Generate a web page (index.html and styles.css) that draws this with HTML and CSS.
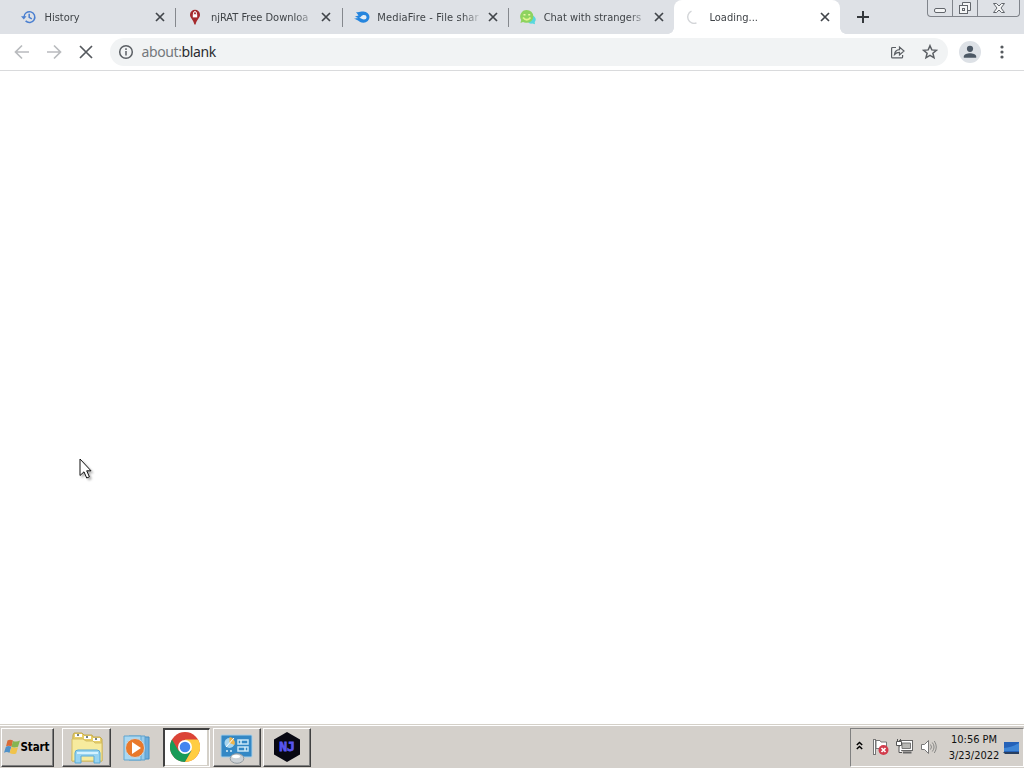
FILE: index.html
```html
<!DOCTYPE html>
<html lang="en">
<head>
    <meta charset="UTF-8">
    <title>Loading...</title>
    <link rel="stylesheet" href="styles.css">
</head>
<body>
    <div class="tab-strip">
        <div class="tab">
            <svg class="favicon" viewBox="0 0 16 16" fill="none" stroke="#4a7fd0" stroke-width="1.5"><path d="M3 8a5.4 5.4 0 1 1 1.6 3.9M8.2 4.8v3.6l2.6 1.5"/><path d="M0 7.2h5.500L2.800 10.500z" fill="#4a7fd0" stroke="none"/></svg>
            <span class="tab-title">History</span>
            <svg class="close" viewBox="0 0 10 10"><path d="M1 1l8 8M9 1L1 9"/></svg>
        </div>
        <div class="tab">
            <svg class="favicon" viewBox="0 0 16 16"><path d="M8 .8a5 5 0 0 0-5 5C3 9 6.5 11 7.4 15.5h1.2C9.500 11 13 9 13 5.8a5 5 0 0 0-5-5z" fill="#a52a2d"/><path d="M5.800 5.200h4.400v3.200H5.800z" fill="#fff"/><path d="M6.600 5.400V4a1.400 1.400 0 0 1 2.800 0v1.400" fill="none" stroke="#fff"/></svg>
            <span class="tab-title">njRAT Free Downloa</span>
            <svg class="close" viewBox="0 0 10 10"><path d="M1 1l8 8M9 1L1 9"/></svg>
        </div>
        <div class="tab">
            <svg class="favicon" viewBox="0 0 16 16"><path d="M2 3C5 3.700 6 2.500 9.500 2.500a6 5.600 0 0 1 0 11.200c-3 0-4-1.400-5.500-2.200L0 9.600c2-.1 3-.1 4-.5L1 7.500l3.500-1z" fill="#2585de"/><path d="M5 8.500C7 9 7 6 10 6a2.600 2.200 0 0 1 0 4.400C8 10.400 7.500 9.500 5 8.500z" fill="#e3edf6"/></svg>
            <span class="tab-title wide">MediaFire - File shar</span>
            <svg class="close" viewBox="0 0 10 10"><path d="M1 1l8 8M9 1L1 9"/></svg>
        </div>
        <div class="tab">
            <svg class="favicon" viewBox="0 0 16 16"><path d="M13 6.500c3 2 3.500 4.500 1.700 6.500l.3 2.300-2.600-.7c-2 .3-3.200 0-4-1z" fill="#58d8de"/><path d="M6.700 1a6.600 6.400 0 0 1 0 12.800c-1.600.2-2.700-.2-3.700-.7L.5 14l.7-3A6.600 6.500 0 0 1 6.700 1z" fill="#8ed35f"/><path d="M3 8.500q3.800 4.500 7.500 0" fill="none" stroke="#dff58f" stroke-width="1.800"/><path d="M3.500 5.800h2M8.200 5.800h2" stroke="#e9f8a8" stroke-width="1.600"/></svg>
            <span class="tab-title">Chat with strangers</span>
            <svg class="close" viewBox="0 0 10 10"><path d="M1 1l8 8M9 1L1 9"/></svg>
        </div>
        <div class="tab active">
            <svg class="favicon" viewBox="0 0 16 16" fill="none" stroke="#d3d5d8" stroke-width="1.400"><path d="M5.500 2.200a6.300 6.300 0 0 0 5 11.600"/></svg>
            <span class="tab-title">Loading...</span>
            <svg class="close" viewBox="0 0 10 10"><path d="M1 1l8 8M9 1L1 9"/></svg>
        </div>
        <svg class="new-tab" viewBox="0 0 12 12"><path d="M6 0v12M0 6h12"/></svg>
        <div class="window-controls">
            <div class="control"><svg width="14" height="14" viewBox="0 0 14 14"><rect x="1.500" y="7.500" width="11" height="4" rx="1.500"/></svg></div>
            <div class="control"><svg width="14" height="14" viewBox="0 0 14 14"><path d="M4.500 4V1.500h8v8H10"/><rect x="1.500" y="4.500" width="8" height="8"/><rect x="4.500" y="7.500" width="2" height="2"/></svg></div>
            <div class="control wide"><svg width="14" height="14" viewBox="0 0 14 14"><path d="M1.500 2.500h3L7 5l2.500-2.500h3L9 7l3.500 4.500h-3L7 9l-2.500 2.500h-3L5 7z"/></svg></div>
        </div>
    </div>

    <div class="toolbar">
        <svg class="nav disabled" viewBox="0 0 16 16"><path d="M15 8H2M8 1.500L1.500 8 8 14.500"/></svg>
        <svg class="nav disabled" viewBox="0 0 16 16"><path d="M1 8h13M8 1.500L14.500 8 8 14.500"/></svg>
        <svg class="nav" viewBox="0 0 16 16"><path d="M2 2l12 12M14 2L2 14"/></svg>
        <div class="omnibox">
            <svg class="info" viewBox="0 0 16 16"><circle cx="8" cy="8" r="6.300"/><path d="M8 7v4.500M8 4.200v1.700"/></svg>
            <span class="url"><span class="scheme">about:</span>blank</span>
            <svg class="share" viewBox="0 0 16 16"><path d="M6 3.500H2.600a1 1 0 0 0-1 1v8.400a1 1 0 0 0 1 1h9a1 1 0 0 0 1-1V11"/><path d="M4.500 10.500c.4-3.400 2-4.700 5-4.800V3L14 7l-4.500 4V8.400c-2.200 0-3.600.6-5 2.100z"/></svg>
            <svg class="star" viewBox="0 0 16 16"><path d="M8 1.700l1.800 4.200 4.600.4-3.500 3 1.100 4.500L8 11.400l-4 2.400 1.100-4.500-3.500-3 4.600-.4z"/></svg>
        </div>
        <svg class="avatar" viewBox="0 0 22 22"><circle cx="11" cy="11" r="11" fill="#dde1e6"/><circle cx="11" cy="7.800" r="3.100"/><path d="M4.800 16.800v-1.300c0-2.200 3.700-3.300 6.200-3.300s6.200 1.100 6.200 3.300v1.300z"/></svg>
        <svg class="menu" viewBox="0 0 4 14"><circle cx="2" cy="2" r="1.600"/><circle cx="2" cy="7" r="1.600"/><circle cx="2" cy="12" r="1.600"/></svg>
    </div>

    <div class="page"></div>

    <div class="taskbar">
        <div class="task start">
            <svg width="17" height="16" viewBox="0 0 17 16"><path d="M3.500 1.500Q6 0 9 1.500L7.500 7.700Q4.500 6 2 7.500z" fill="#d86a36"/><path d="M9 1.900q3.500 1.500 7-.4L14 7.800q-3.500 1.600-6.500-.1z" fill="#85b550"/><path d="M1.800 7.900q2.700-1.500 5.500-.1L5.500 14Q3 12.300 0 13.700z" fill="#4f91c9"/><path d="M7.500 8.100q3 1.600 6.500.1L12.200 14.500q-3.200 1.300-6.600-.4z" fill="#f0c34b"/></svg>
            <span>Start</span>
        </div>
        <div class="task explorer">
            <svg width="34" height="32" viewBox="0 0 34 32"><path d="M3 3l1-2h8l2 2h8l1 2h7l2 2v22H2z" fill="#e8cf69" stroke="#c4aa4c"/><path d="M5 2h7v3H5zM14 4h7v3h-7zM23 6h7v3h-7z" fill="#fff"/><path d="M7 3h2M16 5h2M25 7h2" stroke="#4a5960" stroke-width="1.500"/><path d="M2 7h11l3 2h7l2 2h7v18H2z" fill="#f7eb9e" stroke="#d5bd62"/><path d="M5 31V21q0-3 3-3h19q3 0 3 3v10h-6v-7H11v7z" fill="#98d4f1" stroke="#58a9d7"/><path d="M7 21h21" stroke="#d5f2ff" stroke-width="2"/></svg>
        </div>
        <div class="task flat">
            <svg width="28" height="28" viewBox="0 0 28 28"><path d="M10 3h16v22H10z" fill="#6daddc" stroke="#468fc3"/><path d="M6 2h16v24H6z" fill="#9acceb" stroke="#5ca1cf"/><path d="M1 2h17v24H1z" fill="#a9d8f2" stroke="#61a5cf"/><circle cx="12" cy="14" r="9.500" fill="#e9792b" stroke="#c8d5df"/><path d="M9 8l9 6-9 6z" fill="#fff"/></svg>
        </div>
        <div class="task chrome">
            <svg width="30" height="30" viewBox="0 0 30 30"><circle cx="15" cy="15" r="15" fill="#db4437"/><path d="M2 7.500A15 15 0 0 0 15 30l6.500-11.200H8.500z" fill="#189b58"/><path d="M28 7.500A15 15 0 0 1 15 30l6.500-11.200L15 7.500z" fill="#ffcd42"/><circle cx="15" cy="15" r="7" fill="#fff"/><circle cx="15" cy="15" r="5.300" fill="#4385ef"/></svg>
        </div>
        <div class="task control-panel">
            <svg width="34" height="32" viewBox="0 0 34 32"><rect x="1" y="3" width="31" height="22" rx="1" fill="#3488c5" stroke="#a8cfe7"/><circle cx="9.500" cy="11" r="5" fill="#a9d6ef"/><path d="M9.500 11V5a6 6 0 0 1 5 8z" fill="#efb44b"/><path d="M6 15l8-9" stroke="#fff"/><path d="M18 8h10v4H18zM18 15h10v4H18z" fill="none" stroke="#c6e5f6" stroke-width="1.500"/><path d="M21 8v4M25 15v4M6 19h2M10 19h2" stroke="#d8eef8" stroke-width="1.500"/><ellipse cx="17" cy="26.500" rx="6.800" ry="4.800" fill="#ccd1d5" stroke="#929ba1"/><ellipse cx="16" cy="24.500" rx="4" ry="1.700" fill="#fff"/></svg>
        </div>
        <div class="task njrat">
            <svg width="28" height="32" viewBox="0 0 28 32"><path d="M14 1l13 7.500v15L14 31 1 23.500v-15z" fill="#080812"/><text x="14" y="20" text-anchor="middle">NJ</text></svg>
        </div>
        <div class="tray">
            <svg class="chevrons" width="7" height="9" viewBox="0 0 7 9"><path d="M.8 4l2.700-2.500L6.200 4M.8 8l2.700-2.500L6.200 8"/></svg>
            <svg class="flag" width="17" height="18" viewBox="0 0 17 18"><path d="M2.500 1v16" stroke="#777" stroke-width="3"/><path d="M2.500 2v14" stroke="#fff"/><path d="M4 2.500h4l1 1.500h5.500v8H9L8 10.500H4z" fill="#fff" stroke="#777"/><circle cx="11.500" cy="12" r="5" fill="#d23c4c"/><path d="M9.500 10l4 4M13.500 10l-4 4" stroke="#fff" stroke-width="1.700"/></svg>
            <svg class="network" width="17" height="17" viewBox="0 0 17 17"><rect x="3.500" y="2.500" width="13" height="10" fill="#fff" stroke="#666"/><path d="M6 5h8.500v5.500H6z" fill="#b8b8b5" stroke="#777"/><path d="M7 14.500h8.500" stroke="#666" stroke-width="2"/><path d="M.5 3.500h5v4h-5zM1.500 1v2.500M4.500 1v2.500M3 7.500V14.500h3" fill="#fff" stroke="#555"/></svg>
            <svg class="volume" width="17" height="16" viewBox="0 0 17 16"><path d="M1.500 5.500h3l4-4v13l-4-4h-3z" fill="#fff" stroke="#777"/><path d="M10.500 5.500q2 2.500 0 5M12.300 3.500q3.500 4.500 0 9M14.300 2q4 6 0 12" fill="none" stroke="#898987"/></svg>
            <div class="clock"><span>10:56 PM</span><span>3/23/2022</span></div>
            <svg class="desktop" width="16" height="14" viewBox="0 0 16 14"><path d="M1 1h15v10H1z" fill="#2562b8"/><path d="M1 7q7 0 15-5v8H1z" fill="#3f86d6"/><path d="M0 11h16v2H2z" fill="#283f60"/></svg>
        </div>
    </div>

    <svg class="cursor" width="14" height="22" viewBox="0 0 14 22"><path d="M1 1v16.500l4-3.700 2.700 6.200 2.700-1.200-2.700-6H12z" fill="#fff" stroke="#111"/></svg>
</body>
</html>
```

FILE: styles.css
```css
* {
    box-sizing: border-box;
}

body {
    margin: 0;
    height: 768px;
    display: flex;
    flex-direction: column;
    overflow: hidden;
    background: #fff;
    font-family: Tahoma, "DejaVu Sans Condensed", "DejaVu Sans", sans-serif;
    font-size: 11px;
}

svg {
    display: block;
    flex: none;
}

.tab-strip {
    display: flex;
    height: 34px;
    flex: none;
    padding-left: 9px;
    background: #dee1e6;
}

.tab {
    width: 166.400px;
    height: 34px;
    display: flex;
    align-items: center;
    padding: 0 10px 0 12px;
    position: relative;
    color: #3f4347;
}

.tab:not(.active)::after {
    content: "";
    position: absolute;
    right: -1px;
    top: 8px;
    width: 1px;
    height: 19px;
    background: #85888d;
}

.tab:nth-child(4)::after {
    display: none;
}

.tab.active {
    margin-left: -0.600px;
    background: #fff;
    border-radius: 8px 8px 0 0;
}

/* curved feet of the selected tab */
.tab.active::before,
.tab.active::after {
    content: "";
    position: absolute;
    bottom: 0;
    width: 6px;
    height: 6px;
}

.tab.active::before {
    left: -6px;
    background: radial-gradient(circle at 0 0, #dee1e6 5.500px, #fff 6px);
}

.tab.active::after {
    right: -6px;
    background: radial-gradient(circle at 100% 0, #dee1e6 5.500px, #fff 6px);
}

.favicon {
    width: 16px;
    height: 16px;
}

.tab-title {
    width: 104px;
    margin-left: 7px;
    padding-left: 0.500px;
    overflow: hidden;
    white-space: nowrap;
    -webkit-mask-image: linear-gradient(to right, #000 82%, rgba(0, 0, 0, 0.2) 98%);
    mask-image: linear-gradient(to right, #000 82%, rgba(0, 0, 0, 0.2) 98%);
}

.tab-title.wide {
    letter-spacing: 0.150px;
}

.close {
    width: 10px;
    height: 10px;
    margin-left: 7px;
    stroke: #41454a;
    stroke-width: 1.700;
}

.new-tab {
    width: 12px;
    height: 12px;
    margin: 11px 0 0 16.500px;
    stroke: #34383c;
    stroke-width: 2;
}

.window-controls {
    display: flex;
    width: 93px;
    height: 17px;
    margin-left: auto;
    margin-right: 4px;
    border: 1px solid #80848b;
    border-top: 0;
    border-radius: 0 0 4px 4px;
}

.control {
    width: 25px;
    display: flex;
    align-items: center;
    justify-content: center;
    border-right: 1px solid #80848b;
}

.control.wide {
    flex: 1;
    border-right: 0;
}

.control svg {
    fill: #f4f5f6;
    stroke: #62666c;
}

.toolbar {
    height: 37px;
    flex: none;
    display: flex;
    align-items: center;
    padding-left: 14px;
    border-bottom: 1px solid #d9dadc;
}

.nav {
    width: 16px;
    height: 16px;
    margin-right: 16px;
    fill: none;
    stroke: #55595e;
    stroke-width: 1.700;
}

.nav.disabled {
    stroke: #b9bbbe;
}

.omnibox {
    width: 838px;
    height: 28px;
    display: flex;
    align-items: center;
    padding: 0 10px 0 8px;
    border-radius: 14px;
    background: #f1f3f4;
}

.info,
.share,
.star {
    width: 16px;
    height: 16px;
    fill: none;
    stroke: #5b5f64;
    stroke-width: 1.500;
}

.share {
    margin-left: auto;
    margin-right: 16px;
    stroke-width: 1.200;
}

.url {
    margin-left: 7.500px;
    margin-top: -1px;
    font-family: Tahoma, "Noto Sans", sans-serif;
    font-size: 14px;
    letter-spacing: -0.400px;
    color: #2a2c2f;
}

.scheme {
    color: #74787c;
}

.avatar {
    width: 22px;
    height: 22px;
    margin-left: 11px;
    fill: #4c5865;
}

.menu {
    width: 4px;
    height: 14px;
    margin-left: 19px;
    fill: #565a5f;
}

.page {
    flex: 1;
}

.taskbar {
    height: 44px;
    flex: none;
    display: flex;
    align-items: flex-start;
    padding: 3px 0 0 1px;
    border-top: 1px solid #d4d0c8;
    background: #d4d0cb;
    box-shadow: inset 0 1px #fff;
}

.task {
    height: 39px;
    display: flex;
    align-items: center;
    justify-content: center;
    border: 1px solid;
    border-color: #fff #404040 #404040 #fff;
    box-shadow: inset -1px -1px #808080;
}

.start {
    width: 53px;
    margin-right: 8px;
    justify-content: flex-start;
    padding: 0 0 2px 2px;
    font-weight: bold;
    color: #000;
}

.start span {
    margin-left: -0.500px;
    font-size: 11.500px;
    letter-spacing: -0.100px;
}

.explorer {
    width: 49px;
}

.flat {
    width: 50px;
    padding-left: 2px;
    border-color: transparent;
    box-shadow: none;
}

.chrome {
    width: 47px;
    margin: 0 3px 0 2px;
    padding: 0 4px 2px 0;
    border-width: 2px 1px 1px 2px;
    border-color: #404040 #fff #fff #404040;
    background: #fff;
    box-shadow: inset -2px -1px #d4d0c8;
}

.control-panel {
    width: 48px;
    margin-right: 2px;
}

.njrat {
    width: 48px;
    padding: 0 1px 2px 0;
}

.njrat text {
    font-family: "DejaVu Sans Mono", monospace;
    font-size: 13px;
    font-weight: bold;
    fill: #5855f0;
    stroke: #5855f0;
    stroke-width: 0.800;
}

.tray {
    width: 174px;
    height: 39px;
    display: flex;
    align-items: center;
    margin-left: auto;
    padding: 0 0 2px 5px;
    border: 1px solid;
    border-color: #808080 #fff #fff #808080;
}

.chevrons {
    margin: 0 9px 3px 0;
    fill: none;
    stroke: #000;
    stroke-width: 1.500;
}

.flag {
    margin-right: 7px;
}

.network {
    margin-right: 7px;
}

.clock {
    width: 56px;
    margin: 2px 0 0 9px;
    display: flex;
    flex-direction: column;
    align-items: center;
    line-height: 16px;
    letter-spacing: -0.050px;
    white-space: nowrap;
    color: #111;
}

.desktop {
    margin: 2px 0 0 1px;
}

.cursor {
    position: absolute;
    left: 79px;
    top: 458px;
    filter: drop-shadow(2px 2px 1px rgba(0, 0, 0, 0.3));
}
```
